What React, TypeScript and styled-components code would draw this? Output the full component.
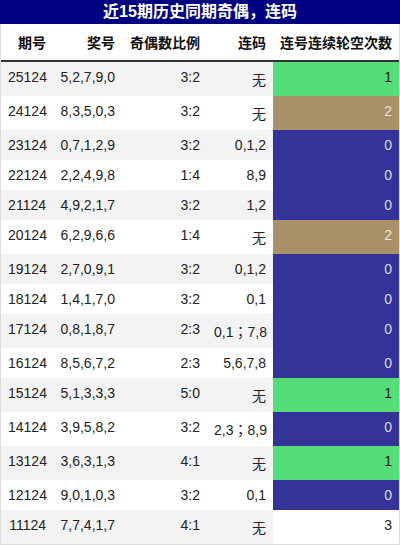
import React from "react";
import styled, { createGlobalStyle } from "styled-components";

const Global = createGlobalStyle`
  html, body { margin: 0; padding: 0; background: #fff; }
  body { font-family: "Liberation Sans", "Noto Sans CJK JP", sans-serif; }
`;

const COLS = "52px 69px 85px 66px 1fr";

const Wrap = styled.div`
  width: 400px;
  box-sizing: border-box;
  border-left: 1px solid #dcdcdc;
  border-right: 1px solid #dcdcdc;
  border-bottom: 1px solid #dcdcdc;
`;

const Title = styled.div`
  height: 24px;
  margin: 0 -1px;
  background: #000080;
  color: #fff;
  font-weight: bold;
  font-size: 16px;
  line-height: 24px;
  text-align: center;
`;

const HeadRow = styled.div`
  display: grid;
  grid-template-columns: ${COLS};
  border-bottom: 2px solid #333;
  background: #fff;
`;

const HeadCell = styled.div`
  padding: 8px 7px;
  text-align: right;
  font-size: 14px;
  font-weight: bold;
  color: #111;
  white-space: nowrap;
`;

const Row = styled.div<{ $odd: boolean }>`
  display: grid;
  grid-template-columns: ${COLS};
  background: ${(p) => (p.$odd ? "#f3f3f3" : "#fff")};
`;

const Cell = styled.div`
  padding: 7px;
  text-align: right;
  font-size: 14px;
  color: #222;
  white-space: nowrap;
`;

const CountCell = styled(Cell)<{ $bg: string; $fg: string }>`
  background: ${(p) => p.$bg};
  color: ${(p) => p.$fg};
`;

const palette: Record<number, { bg: string; fg: string }> = {
  0: { bg: "#333399", fg: "#dcdcec" },
  1: { bg: "#55dd7a", fg: "#111" },
  2: { bg: "#a89068", fg: "#ece6dc" },
  3: { bg: "#fff", fg: "#222" },
};

const rows: [string, string, string, string, number][] = [
  ["25124", "5,2,7,9,0", "3:2", "无", 1],
  ["24124", "8,3,5,0,3", "3:2", "无", 2],
  ["23124", "0,7,1,2,9", "3:2", "0,1,2", 0],
  ["22124", "2,2,4,9,8", "1:4", "8,9", 0],
  ["21124", "4,9,2,1,7", "3:2", "1,2", 0],
  ["20124", "6,2,9,6,6", "1:4", "无", 2],
  ["19124", "2,7,0,9,1", "3:2", "0,1,2", 0],
  ["18124", "1,4,1,7,0", "3:2", "0,1", 0],
  ["17124", "0,8,1,8,7", "2:3", "0,1；7,8", 0],
  ["16124", "8,5,6,7,2", "2:3", "5,6,7,8", 0],
  ["15124", "5,1,3,3,3", "5:0", "无", 1],
  ["14124", "3,9,5,8,2", "3:2", "2,3；8,9", 0],
  ["13124", "3,6,3,1,3", "4:1", "无", 1],
  ["12124", "9,0,1,0,3", "3:2", "0,1", 0],
  ["11124", "7,7,4,1,7", "4:1", "无", 3],
];

export default function App() {
  return (
    <>
      <Global />
      <Wrap>
        <Title>近15期历史同期奇偶，连码</Title>
        <HeadRow>
          <HeadCell>期号</HeadCell>
          <HeadCell>奖号</HeadCell>
          <HeadCell>奇偶数比例</HeadCell>
          <HeadCell>连码</HeadCell>
          <HeadCell>连号连续轮空次数</HeadCell>
        </HeadRow>
        {rows.map(([issue, nums, ratio, lian, count], i) => (
          <Row key={issue} $odd={i % 2 === 0}>
            <Cell>{issue}</Cell>
            <Cell>{nums}</Cell>
            <Cell>{ratio}</Cell>
            <Cell>{lian}</Cell>
            <CountCell $bg={palette[count].bg} $fg={palette[count].fg}>
              {count}
            </CountCell>
          </Row>
        ))}
      </Wrap>
    </>
  );
}
